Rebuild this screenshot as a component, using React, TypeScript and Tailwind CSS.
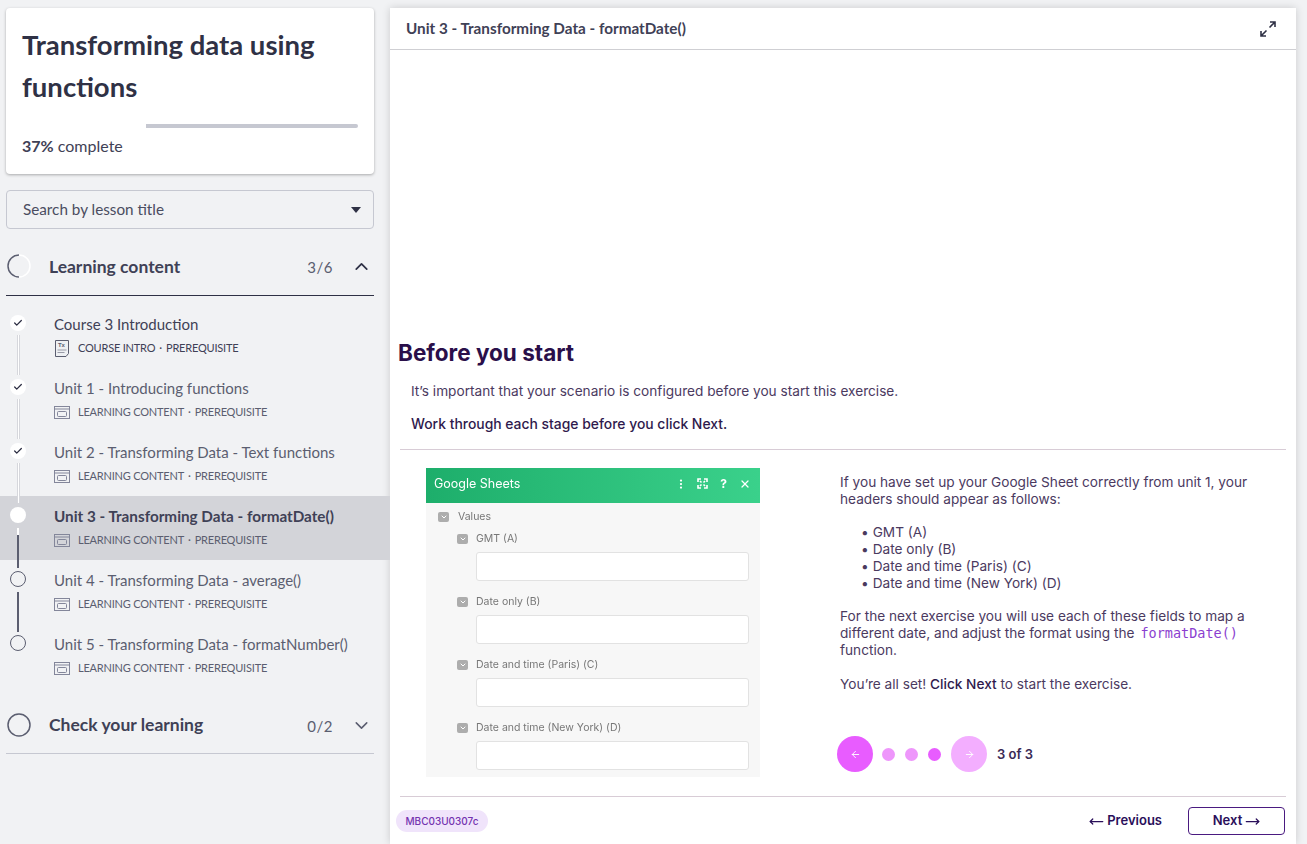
import React from 'react';
import { Check, ChevronDown, ChevronUp, ArrowLeft, ArrowRight, MoveLeft, MoveRight, X, MoreVertical } from 'lucide-react';

const SANS = "font-['Lato',sans-serif]";
const INTER = "font-['Inter',sans-serif]";

interface Lesson {
  title: string;
  kind: string;
  doc?: boolean;
  done?: boolean;
  active?: boolean;
  line?: 'light' | 'mixed' | 'dark';
}

const lessons: Lesson[] = [
  { title: 'Course 3 Introduction', kind: 'COURSE INTRO', doc: true, done: true, line: 'light' },
  { title: 'Unit 1 - Introducing functions', kind: 'LEARNING CONTENT', done: true, line: 'light' },
  { title: 'Unit 2 - Transforming Data - Text functions', kind: 'LEARNING CONTENT', done: true, line: 'light' },
  { title: 'Unit 3 - Transforming Data - formatDate()', kind: 'LEARNING CONTENT', active: true, line: 'mixed' },
  { title: 'Unit 4 - Transforming Data - average()', kind: 'LEARNING CONTENT', line: 'dark' },
  { title: 'Unit 5 - Transforming Data - formatNumber()', kind: 'LEARNING CONTENT' },
];

const sheetFields = ['GMT (A)', 'Date only (B)', 'Date and time (Paris) (C)', 'Date and time (New York) (D)'];

const LessonIcon = ({ doc }: { doc?: boolean }) =>
  doc ? (
    <svg width="15" height="17" viewBox="0 0 15 17" fill="none" className="shrink-0 ml-[1px] mr-[8px]">
      <path d="M0.5 0.5h13v13l-2.5 3h-10.500z" stroke="#5b5e70" strokeWidth="1" fill="#eef0f3" />
      <text x="3" y="7" fontSize="6" fontWeight="700" fill="#5b5e70" fontFamily="Liberation Sans">Tx</text>
      <path d="M2.500 10h9M2.500 12.500h7" stroke="#9a9ca8" strokeWidth="1" />
    </svg>
  ) : (
    <svg width="16" height="13" viewBox="0 0 16 13" fill="none" className="shrink-0 mr-[8px]">
      <rect x="0.5" y="0.5" width="15" height="12" stroke="#83869a" />
      <path d="M1 3h14" stroke="#83869a" />
      <rect x="3.5" y="5.5" width="9" height="5" rx="1" stroke="#83869a" />
    </svg>
  );

const LessonRow = ({ lesson }: { lesson: Lesson }) => (
  <div className={`relative flex h-16 pl-[10px] pt-[11px] ${lesson.active ? 'bg-[#d3d4d9]' : ''}`}>
    <div
      className={`relative z-10 flex h-4 w-4 shrink-0 items-center justify-center rounded-full ${
        lesson.done || lesson.active ? 'bg-white' : 'border border-[#5b5e70] bg-[#f1f2f4]'
      }`}
    >
      {lesson.done && <Check size={10} strokeWidth={3} className="text-[#2b2d42]" />}
    </div>
    {lesson.line === 'light' && (
      <div className="absolute left-[17px] top-[31px] z-10 h-10 w-[3px] border-x border-[#d6d7dc] bg-white" />
    )}
    {lesson.line === 'mixed' && (
      <div className="absolute left-[17px] top-[32px] z-10 flex h-10 w-[2px] flex-col">
        <div className="h-[7px] bg-white" />
        <div className="flex-1 bg-[#5b5e70]" />
      </div>
    )}
    {lesson.line === 'dark' && <div className="absolute left-[17px] top-[32px] z-10 h-10 w-[2px] bg-[#5b5e70]" />}
    <div className="ml-[28px] min-w-0">
      <div
        className={`leading-[18px] whitespace-nowrap ${
          lesson.active
            ? 'text-[15.25px] font-bold text-[#3f4156]'
            : lesson.doc
              ? 'text-[15px] text-[#3f4156]'
              : 'text-[15px] text-[#5b5e70]'
        }`}
      >
        {lesson.title}
      </div>
      <div
        className={`mt-[7px] flex h-[17px] items-center text-[11px] tracking-[-0.2px] whitespace-nowrap ${
          lesson.doc ? 'text-[#3f4156]' : 'text-[#5b5e70]'
        }`}
      >
        <LessonIcon doc={lesson.doc} />
        <span>{lesson.kind}</span>
        <span className="mx-[4px]">·</span>
        <span>PREREQUISITE</span>
      </div>
    </div>
  </div>
);

const Sidebar = () => (
  <aside className={`${SANS} flex w-[390px] shrink-0 flex-col px-[6px] pt-2`}>
    <div className="h-[166px] w-[368px] rounded-[4px] bg-white pl-4 pr-4 pt-4 shadow-[0_1px_3px_rgba(0,0,0,0.3)]">
      <h1 className="text-[27.5px] font-bold leading-[42px] text-[#2f3145]">Transforming data using functions</h1>
      <div className="mt-[16px] flex h-[4px] w-[336px]">
        <div className="w-[37%]" />
        <div className="flex-1 rounded-r-sm bg-[#c6c8d1]" />
      </div>
      <div className="mt-[8px] text-[16px] leading-5 text-[#3f4156]">
        <span className="font-bold">37%</span> complete
      </div>
    </div>

    <div className="mt-4 flex h-[39px] w-[368px] items-center justify-between rounded-[4px] border border-[#c6c8d1] pl-4 pr-3 text-[15.25px] text-[#4a4c60]">
      <span>Search by lesson title</span>
      <span className="h-0 w-0 border-x-[5px] border-t-[6px] border-x-transparent border-t-[#2f3145]" />
    </div>

    <div className="mt-[21px] flex h-[46px] w-[368px] items-start border-b border-[#2f3145]">
      <svg width="24" height="24" viewBox="0 0 24 24" fill="none" className="mt-[4px] ml-[1px] shrink-0">
        <circle cx="12" cy="12" r="11" stroke="#ffffff" strokeWidth="1.5" />
        <path d="M12 1a11 11 0 0 0 0 22" stroke="#5b5e70" strokeWidth="1.5" />
      </svg>
      <span className="ml-[18px] mt-[5px] flex-1 text-[17.5px] font-bold leading-[24px] text-[#3f4156]">Learning content</span>
      <span className="mt-[5px] text-[15px] leading-6 tracking-[0.5px] text-[#5b5e70]">3/6</span>
      <ChevronUp size={21} strokeWidth={2} className="ml-[18px] mr-[2px] mt-[6px] text-[#2f3145]" />
    </div>

    <div className="-mx-[6px] mt-[8px]">
      {lessons.map((l) => (
        <LessonRow key={l.title} lesson={l} />
      ))}
    </div>

    <div className="mt-[25px] flex h-[41px] w-[368px] items-start border-b border-[#c6c8d1]">
      <svg width="24" height="24" viewBox="0 0 24 24" fill="none" className="ml-[1px] shrink-0">
        <circle cx="12" cy="12" r="11" stroke="#5b5e70" strokeWidth="1.5" />
      </svg>
      <span className="ml-[18px] flex-1 text-[17.5px] font-bold leading-[24px] text-[#3f4156]">Check your learning</span>
      <span className="mt-[1px] text-[15px] leading-6 tracking-[0.5px] text-[#5b5e70]">0/2</span>
      <ChevronDown size={21} strokeWidth={1.75} className="ml-[18px] mr-[2px] mt-[2px] text-[#5b5e70]" />
    </div>
  </aside>
);

const FieldToggle = () => (
  <span className="flex h-[10px] w-[11px] shrink-0 items-center justify-center rounded-[2px] bg-[#adadad]">
    <ChevronDown size={8} strokeWidth={3} className="text-white" />
  </span>
);

const SheetsModule = () => (
  <div className="ml-[26px] h-[309px] w-[334px] shrink-0 overflow-hidden bg-[#f7f7f7] blur-[0.25px] font-['Inter',sans-serif]">
    <div className="flex h-[35px] items-center justify-between bg-gradient-to-r from-[#1dae6b] to-[#3ad18b] pl-[8px] pr-[9px] text-white">
      <span className="mb-[3px] text-[12.5px]">Google Sheets</span>
      <div className="mb-[4px] flex items-center gap-[10px]">
        <MoreVertical size={12} strokeWidth={2.5} />
        <svg width="11" height="11" viewBox="0 0 11 11" fill="none" stroke="white" strokeWidth="1.6">
          <path d="M1 4V1h3M7 1h3v3M10 7v3H7M4 10H1V7M3 3l1.500 1.500M8 3L6.500 4.500M8 8L6.500 6.500M3 8l1.500-1.500" />
        </svg>
        <span className="w-[11px] text-center text-[12px] font-bold leading-none">?</span>
        <X size={12} strokeWidth={2.5} />
      </div>
    </div>
    <div className="flex h-[28px] items-center gap-[9px] pl-[12px] text-[10.5px] text-[#777]">
      <FieldToggle />
      <span>Values</span>
    </div>
    <div className="pl-[31px] pr-[11px]">
      {sheetFields.map((f) => (
        <div key={f} className="h-[63px] pt-[1px]">
          <div className="flex h-[14px] items-center gap-[8px] text-[10.5px] text-[#777]">
            <FieldToggle />
            <span>{f}</span>
          </div>
          <div className="ml-[19px] mt-[6px] h-[29px] rounded-[3px] border border-[#e2e2e2] bg-white" />
        </div>
      ))}
    </div>
  </div>
);

const Carousel = () => (
  <div className="flex items-center">
    <div className="flex h-[36px] w-[36px] items-center justify-center rounded-full bg-[#e85cff] text-white">
      <ArrowLeft size={11} strokeWidth={2} />
    </div>
    <span className="ml-[9px] h-[13px] w-[13px] rounded-full bg-[#ee96fb]" />
    <span className="ml-[10px] h-[13px] w-[13px] rounded-full bg-[#ee96fb]" />
    <span className="ml-[10px] h-[13px] w-[13px] rounded-full bg-[#e85cff]" />
    <div className="ml-[10px] flex h-[36px] w-[36px] items-center justify-center rounded-full bg-[#f3aeff] text-white">
      <ArrowRight size={11} strokeWidth={2} />
    </div>
    <span className="ml-[10px] text-[13px] font-semibold text-[#3a2a55]">3 of 3</span>
  </div>
);

const Main = () => (
  <main className="mt-2 flex h-[836px] w-[906px] shrink-0 flex-col bg-white shadow-[0_0_8px_rgba(0,0,0,0.16)]">
    <header className={`${SANS} flex h-[42px] shrink-0 items-center justify-between border-b border-[#cfcfd3] pl-[16px] pr-[20px]`}>
      <span className="text-[15.25px] font-bold text-[#3f4156]">Unit 3 - Transforming Data - formatDate()</span>
      <svg width="16" height="16" viewBox="0 0 16 16" fill="none">
        <path d="M9.5 6.5L15 1M10 1h5v5" stroke="#2f3145" strokeWidth="1.6" />
        <path d="M6.5 9.5L1 15M1 10v5h5" stroke="#2f3145" strokeWidth="1.6" />
      </svg>
    </header>

    <div className={`${INTER} flex flex-1 flex-col`}>
      <h2 className="mt-[288px] pl-2 text-[22.5px] font-bold leading-[30px] text-[#2a0f4a]">Before you start</h2>
      <p className="mt-[15px] pl-[21px] text-[13.65px] leading-[17px] text-[#4b3a5f]">
        It’s important that your scenario is configured before you start this exercise.
      </p>
      <p className="mt-[16px] pl-[21px] text-[13.9px] font-medium leading-[17px] text-[#2f1a4d]">
        Work through each stage before you click Next.
      </p>

      <div className="mx-[10px] mt-[16px] flex h-[348px] border-y border-[#d8ccd6] pt-[18px]">
        <SheetsModule />
        <div className="ml-[80px] flex w-[415px] flex-col pt-[6px] text-[13.65px] leading-[17px] text-[#4b3a5f]">
          <p>If you have set up your Google Sheet correctly from unit 1, your headers should appear as follows:</p>
          <ul className="mt-[16px] pl-[21px]">
            <li className="flex"><span className="mr-[4px]">•</span>GMT (A)</li>
            <li className="flex"><span className="mr-[4px]">•</span>Date only (B)</li>
            <li className="flex"><span className="mr-[4px]">•</span>Date and time (Paris) (C)</li>
            <li className="flex"><span className="mr-[4px]">•</span>Date and time (New York) (D)</li>
          </ul>
          <p className="mt-[16px]">
            For the next exercise you will use each of these fields to map a different date, and adjust the format using the{' '}
            <code className="ml-[2px] font-['DejaVu_Sans_Mono',monospace] text-[13.5px] leading-none text-[#8b3fd0]">formatDate()</code> function.
          </p>
          <p className="mt-[17px]">
            You’re all set! <span className="font-medium text-[#2f1a4d]">Click Next</span> to start the exercise.
          </p>
          <div className="ml-[-3px] mt-[43px]">
            <Carousel />
          </div>
        </div>
      </div>

      <div className="flex items-start justify-between pl-[6px] pr-[11px] pt-[10px]">
        <span className="mt-[3px] flex h-[22px] w-[92px] items-center justify-center rounded-full bg-[#f0e4fb] text-[10px] font-medium text-[#7433b0]">
          MBC03U0307c
        </span>
        <div className="flex items-center">
          <span className="flex items-center gap-[3px] text-[13px] font-semibold text-[#2a0f5a]">
            <MoveLeft size={15} strokeWidth={2} />
            Previous
          </span>
          <span className="ml-[26px] flex h-[28px] w-[97px] items-center justify-center gap-[3px] rounded-[4px] border border-[#4a1a80] text-[13px] font-semibold text-[#2a0f5a]">
            Next
            <MoveRight size={15} strokeWidth={2} />
          </span>
        </div>
      </div>
    </div>
  </main>
);

export default function App() {
  return (
    <div className="flex h-[844px] w-[1307px] overflow-hidden bg-[#f1f2f4]">
      <Sidebar />
      <Main />
    </div>
  );
}
